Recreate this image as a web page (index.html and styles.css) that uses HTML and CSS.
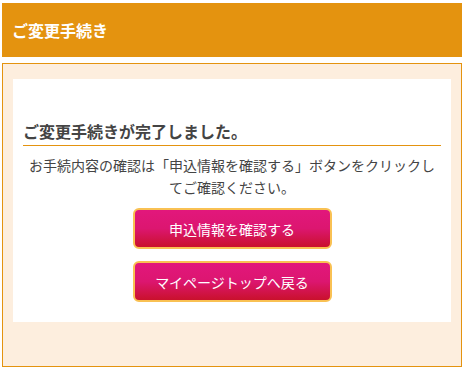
FILE: index.html
```html
<!DOCTYPE html>
<html lang="ja">
  <head>
    <meta charset="utf-8">
    <link rel="stylesheet" href="styles.css">
  </head>
  <body>
    <div class="page-header">
      <h1 class="page-title">ご変更手続き</h1>
    </div>
    <div class="content">
      <div class="panel">
        <h2 class="panel-title">ご変更手続きが完了しました。</h2>
        <p class="panel-text">お手続内容の確認は「申込情報を確認する」ボタンをクリックしてご確認ください。</p>
        <div class="buttons">
          <a class="btn" href="#">申込情報を確認する</a>
          <a class="btn" href="#">マイページトップへ戻る</a>
        </div>
      </div>
    </div>
  </body>
</html>
```

FILE: styles.css
```css
body {
  margin: 3px 4px 0 2px;
  font-family: "Noto Sans CJK JP", "Noto Sans", sans-serif;
  color: #444;
  background: #fff;
}

.page-header {
  height: 54px;
  display: flex;
  align-items: center;
  padding: 0 10px;
  background: #e4930f;
}
.page-title {
  margin: 0;
  font-size: 16px;
  font-weight: bold;
  color: #fff;
}

.content {
  margin-top: 6px;
  border: 1px solid #e4930f;
  background: #fdeede;
  padding: 15px 10px 44px;
}

.panel {
  background: #fff;
  padding: 40px 10px 20px;
}
.panel-title {
  margin: 0;
  font-size: 16px;
  font-weight: bold;
  line-height: 24px;
  padding-bottom: 2px;
  border-bottom: 1px solid #e4930f;
  color: #444;
}
.panel-text {
  margin: 8px 0 0;
  font-size: 14px;
  line-height: 22px;
  text-align: center;
}

.buttons {
  margin-top: 10px;
  display: flex;
  flex-direction: column;
  align-items: center;
  gap: 12px;
}
.btn {
  box-sizing: border-box;
  width: 199px;
  height: 41px;
  display: flex;
  align-items: center;
  justify-content: center;
  border: 2px solid #f9c153;
  border-radius: 6px;
  background: linear-gradient(#e2177c, #dc1670 50%, #c9112c);
  color: #fff;
  font-size: 14px;
  text-decoration: none;
}
```
